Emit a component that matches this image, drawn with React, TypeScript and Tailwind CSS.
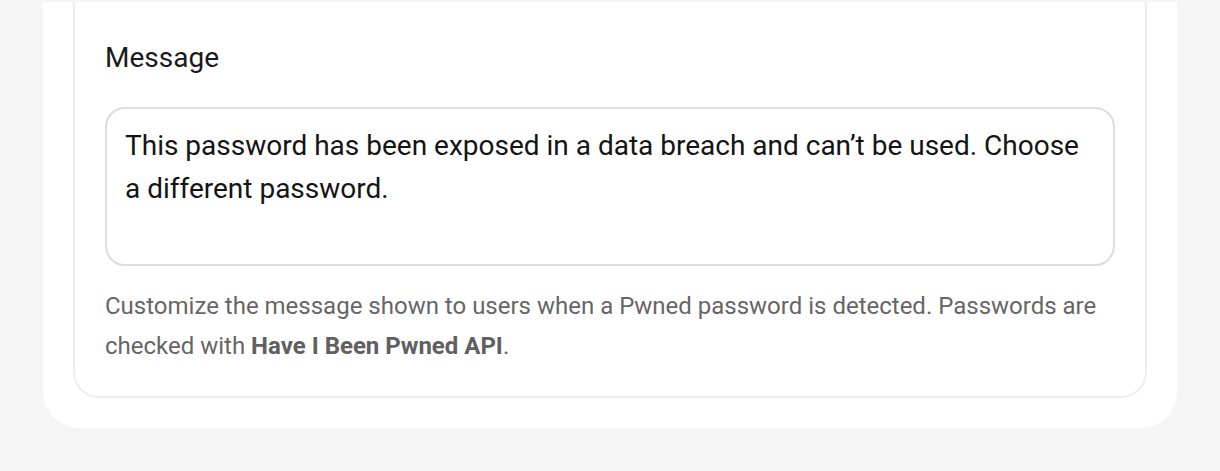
export default function App() {
  return (
    <div className="min-h-[471px] bg-[#f5f5f5] pt-[2px] font-['Roboto',sans-serif]">
      <div className="mx-[43px] rounded-b-[36px] bg-white px-[30px] pb-[30px]">
        <section className="rounded-b-[26px] border-x-2 border-b-2 border-[#eeeeee] px-[30px] pb-[30px] pt-[36px]">
          <label
            htmlFor="pwned-message"
            className="block text-[28px] leading-[40px] text-[#1a1a1a]"
          >
            Message
          </label>
          <textarea
            id="pwned-message"
            readOnly
            defaultValue="This password has been exposed in a data breach and can’t be used. Choose a different password."
            className="mt-[29px] block h-[159px] w-full resize-none rounded-[20px] border-2 border-[#dddddd] bg-white px-[18px] pt-[15px] text-[28px] leading-[43px] text-[#141414] outline-none"
          />
          <p className="mt-[20px] text-[24px] leading-[40px] text-[#666666]">
            Customize the message shown to users when a Pwned password is
            detected. Passwords are checked with{" "}
            <strong className="font-bold text-[#606060]">
              Have I Been Pwned API
            </strong>
            .
          </p>
        </section>
      </div>
    </div>
  );
}
